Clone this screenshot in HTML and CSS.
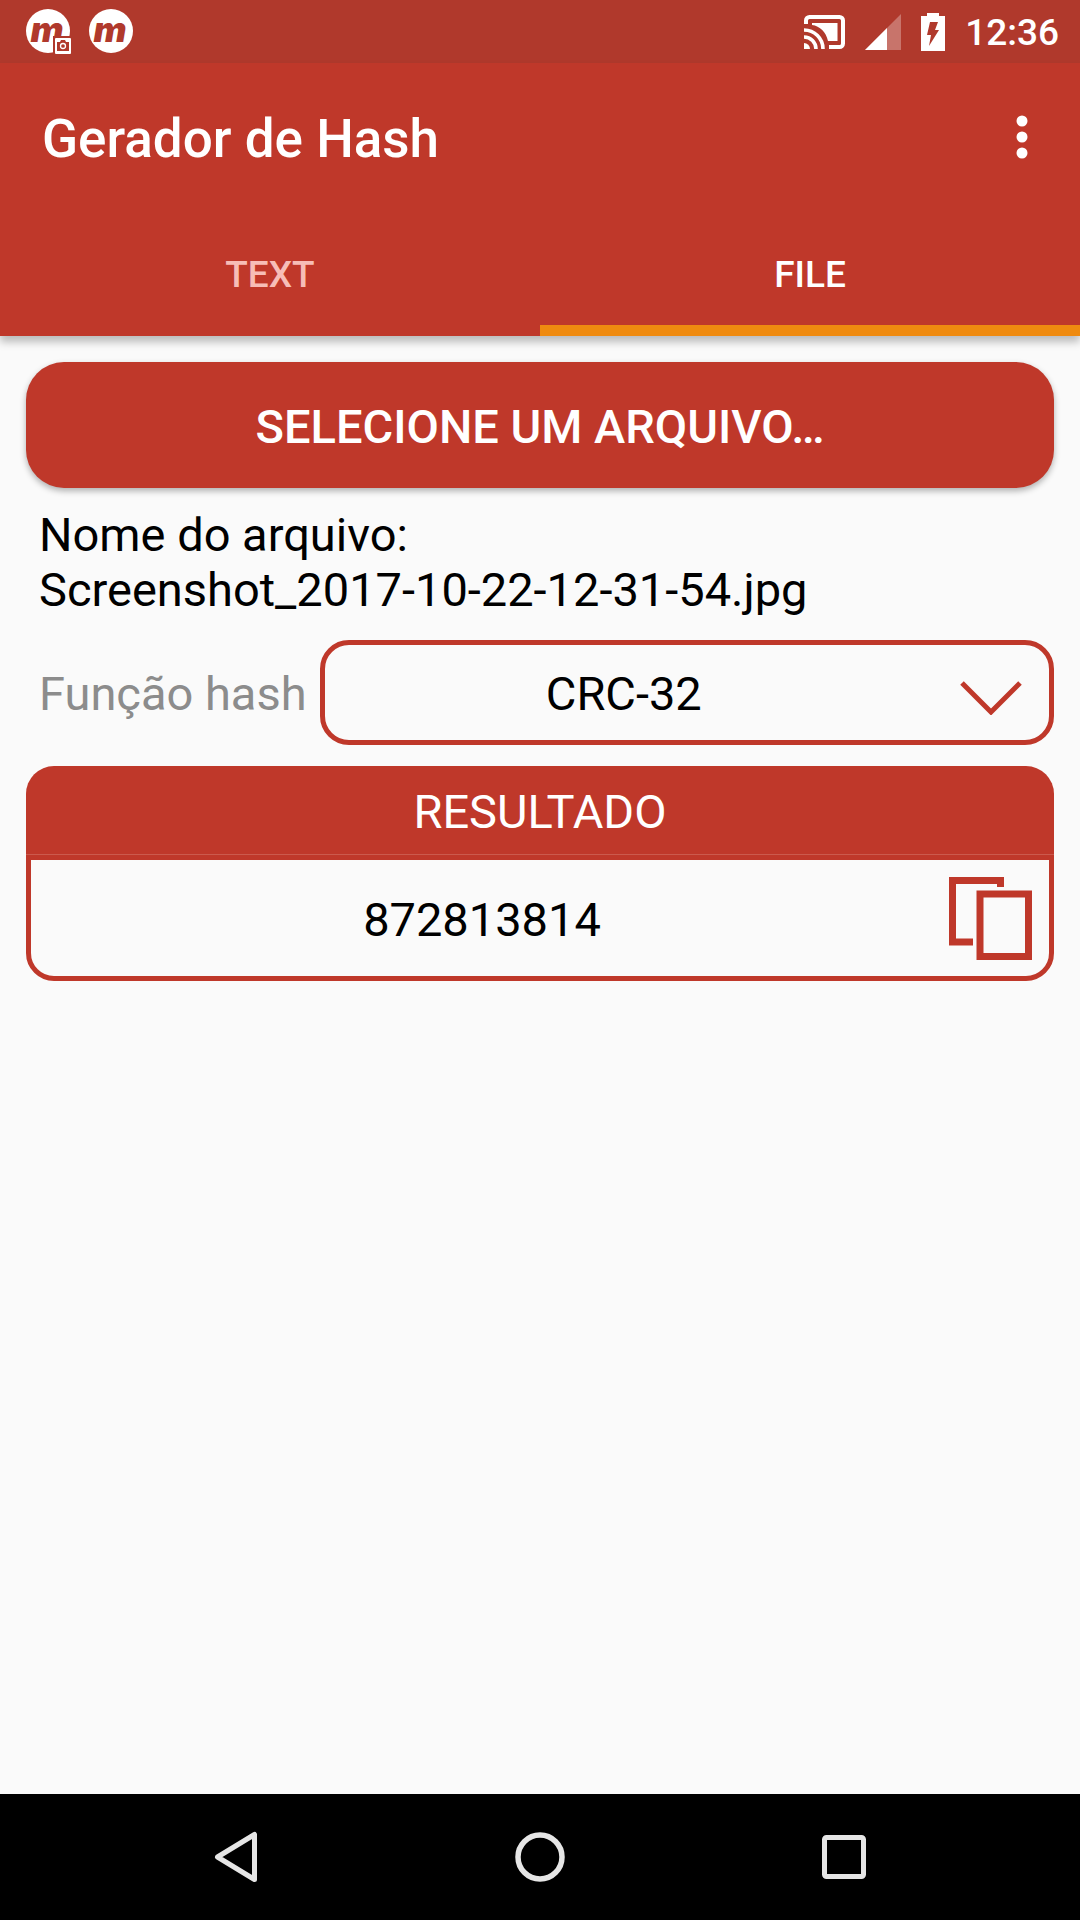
FILE: index.html
```html
<!DOCTYPE html>
<html lang="pt-BR">
<head>
    <meta charset="utf-8">
    <meta name="viewport" content="width=device-width, initial-scale=1">
    <title>Gerador de Hash</title>
    <link rel="stylesheet" href="styles.css">
</head>
<body>
    <div class="status-bar">
        <svg class="app-icon" width="45" height="45" viewBox="0 0 45 45">
            <circle cx="22" cy="22" r="22" fill="#fff"/>
            <text class="app-letter" x="21" y="33" text-anchor="middle">m</text>
            <rect x="27" y="27" width="18" height="18" fill="#b0392c"/>
            <rect x="29" y="29" width="16" height="16" rx="1" fill="#fff"/>
            <path d="M31 33h3l1-2h4l1 2h3v9H31z" fill="#b0392c"/>
            <circle cx="37" cy="37" r="2.5" fill="none" stroke="#fff" stroke-width="1.3"/>
        </svg>
        <svg class="app-icon" width="45" height="45" viewBox="0 0 45 45">
            <circle cx="22" cy="22" r="22" fill="#fff"/>
            <text class="app-letter" x="21" y="33" text-anchor="middle">m</text>
        </svg>
        <div class="status-right">
            <svg width="41" height="34" viewBox="0 0 41 34">
                <path d="M2 9V5.500a3.500 3.500 0 0 1 3.500-3.500h30a3.500 3.500 0 0 1 3.500 3.500v23a3.500 3.500 0 0 1-3.500 3.500H25" fill="none" stroke="#fff" stroke-width="4"/>
                <path d="M8 8h25.500v18H24C22 17 16 11 8 10z" fill="#fff"/>
                <path d="M0 15a19 19 0 0 1 19 19M0 22a12 12 0 0 1 12 12" fill="none" stroke="#fff" stroke-width="3.600"/>
                <path d="M0 28a6 6 0 0 1 6 6H0z" fill="#fff"/>
            </svg>
            <svg width="36" height="36" viewBox="0 0 36 36">
                <path d="M36 0v36H0z" fill="#fff" opacity=".3"/>
                <path d="M22 14v22H0z" fill="#fff"/>
            </svg>
            <svg width="24" height="38" viewBox="0 0 24 38">
                <path d="M6 0h12v3h6v35H0V3h6z" fill="#fff"/>
                <path d="M9 9h8l-3 8h4L8 33l2-11H6z" fill="#b0392c"/>
            </svg>
            <span class="clock">12:36</span>
        </div>
    </div>

    <header class="app-bar">
        <div class="toolbar">
            <h1 class="title">Gerador de Hash</h1>
            <button class="menu-btn" type="button" aria-label="Menu">
                <svg width="12" height="44" viewBox="0 0 12 44" fill="#fff">
                    <circle cx="6" cy="6" r="5.500"/>
                    <circle cx="6" cy="22" r="5.500"/>
                    <circle cx="6" cy="38" r="5.500"/>
                </svg>
            </button>
        </div>
        <div class="tabs" role="tablist">
            <button class="tab" type="button" role="tab" aria-selected="false">TEXT</button>
            <button class="tab active" type="button" role="tab" aria-selected="true">FILE</button>
        </div>
    </header>

    <main class="content">
        <button class="select-file" type="button">SELECIONE UM ARQUIVO…</button>

        <p class="file-name">Nome do arquivo:<br>Screenshot_2017-10-22-12-31-54.jpg</p>

        <div class="hash-row">
            <label for="hashFunction">Função hash</label>
            <div class="select-box">
                <select id="hashFunction">
                    <option>CRC-32</option>
                    <option>MD5</option>
                    <option>SHA-1</option>
                    <option>SHA-256</option>
                </select>
                <svg class="arrow" width="62" height="34" viewBox="0 0 62 34">
                    <path d="M2 2l29 29L60 2" fill="none" stroke="#bf382a" stroke-width="5"/>
                </svg>
            </div>
        </div>

        <section class="result">
            <h2 class="result-title">RESULTADO</h2>
            <div class="result-body">
                <output class="result-value" for="hashFunction">872813814</output>
                <button class="copy-btn" type="button" aria-label="Copiar">
                    <svg width="83" height="83" viewBox="0 0 83 83" fill="none" stroke="#bf382a" stroke-width="7">
                        <path d="M51.500 10V3.500h-48v61.500H24"/>
                        <path d="M31 17h48.500v62.500H31z"/>
                    </svg>
                </button>
            </div>
        </section>
    </main>

    <nav class="nav-bar">
        <button class="nav-btn" type="button" aria-label="Voltar">
            <svg width="52" height="52" viewBox="0 0 52 52">
                <path d="M44.500 3.500v45L7.500 26z" fill="none" stroke="#e6e6e6" stroke-width="5" stroke-linejoin="round"/>
            </svg>
        </button>
        <button class="nav-btn" type="button" aria-label="Início">
            <svg width="52" height="52" viewBox="0 0 52 52">
                <circle cx="26" cy="26" r="22" fill="none" stroke="#e6e6e6" stroke-width="5.500"/>
            </svg>
        </button>
        <button class="nav-btn" type="button" aria-label="Recentes">
            <svg width="52" height="52" viewBox="0 0 52 52">
                <rect x="6.500" y="6.500" width="39" height="39" rx="2" fill="none" stroke="#e6e6e6" stroke-width="5"/>
            </svg>
        </button>
    </nav>
</body>
</html>
```
FILE: styles.css
```css
* {
    box-sizing: border-box;
}
body {
    margin: 0;
    min-height: 100vh;
    display: flex;
    flex-direction: column;
    background: #fafafa;
    color: #000;
    font-family: Roboto, "Liberation Sans", sans-serif;
    font-size: 47px;
    line-height: 55px;
}
button, select {
    font: inherit;
    color: inherit;
    background: none;
    border: 0;
    padding: 0;
    margin: 0;
}
svg {
    display: block;
}

/* status bar */
.status-bar {
    display: flex;
    align-items: center;
    gap: 18px;
    height: 63px;
    padding: 0 21px 0 26px;
    background: #b0392c;
    color: #fff;
}
.app-icon {
    overflow: visible;
}
.app-letter {
    font-family: Inter, Roboto, sans-serif;
    font-size: 35px;
    line-height: 40px;
    font-weight: 900;
    font-style: italic;
    fill: #b0392c;
}
.status-right {
    display: flex;
    align-items: center;
    gap: 20px;
    margin-left: auto;
}
.clock {
    padding-top: 2px;
    font-size: 37px;
    font-weight: 500;
}

/* app bar */
.app-bar {
    background: #bf382a;
    color: #fff;
    box-shadow: 0 6px 8px rgba(0, 0, 0, 0.25);
}
.toolbar {
    display: flex;
    align-items: center;
    justify-content: space-between;
    height: 147px;
    padding: 0 26px 0 42px;
}
.title {
    margin: 0;
    padding-top: 5px;
    font-size: 53px;
    font-weight: 500;
}
.menu-btn {
    display: flex;
    justify-content: center;
    width: 64px;
}
.tabs {
    display: flex;
    height: 126px;
}
.tab {
    flex: 1;
    padding-top: 2px;
    border-top: 11px solid transparent;
    border-bottom: 11px solid transparent;
    font-size: 37px;
    font-weight: 500;
    color: #f7bdb7;
}
.tab.active {
    color: #fff;
    border-bottom-color: #ef8a0f;
}

/* content */
.content {
    flex: 1;
    padding: 26px;
}
.select-file {
    display: block;
    width: 100%;
    height: 126px;
    padding-top: 2px;
    border-radius: 38px;
    background: #bf382a;
    color: #fff;
    font-weight: 500;
    box-shadow: 0 3px 6px rgba(0, 0, 0, 0.3);
}
.file-name {
    margin: 19px 13px 23px;
}
.hash-row {
    display: flex;
    align-items: center;
    gap: 13px;
    padding-left: 13px;
    margin-bottom: 21px;
}
.hash-row label {
    padding-top: 2px;
    color: #8c8c8c;
}
.select-box {
    position: relative;
    flex: 1;
}
.select-box select {
    display: block;
    appearance: none;
    width: 100%;
    height: 105px;
    padding-top: 2px;
    padding-right: 126px;
    border: 5px solid #bf382a;
    border-radius: 29px;
    text-align: center;
    text-align-last: center;
}
.arrow {
    position: absolute;
    top: 41px;
    right: 32px;
    pointer-events: none;
}
.result-title {
    margin: 0;
    padding: 18px 0 15px;
    border-bottom: 1px solid #cb5a4d;
    border-radius: 28px 28px 0 0;
    background: #bf382a;
    color: #fff;
    font-size: 47px;
    font-weight: 400;
    text-align: center;
}
.result-body {
    display: flex;
    align-items: center;
    height: 126px;
    padding-right: 17px;
    border: 5px solid #bf382a;
    border-radius: 0 0 28px 28px;
}
.result-value {
    flex: 1;
    padding-top: 2px;
    padding-right: 16px;
    text-align: center;
}

/* navigation bar */
.nav-bar {
    display: flex;
    align-items: center;
    justify-content: center;
    gap: 220px;
    height: 126px;
    background: #000;
}
.nav-btn {
    display: flex;
    justify-content: center;
    width: 84px;
}
```
